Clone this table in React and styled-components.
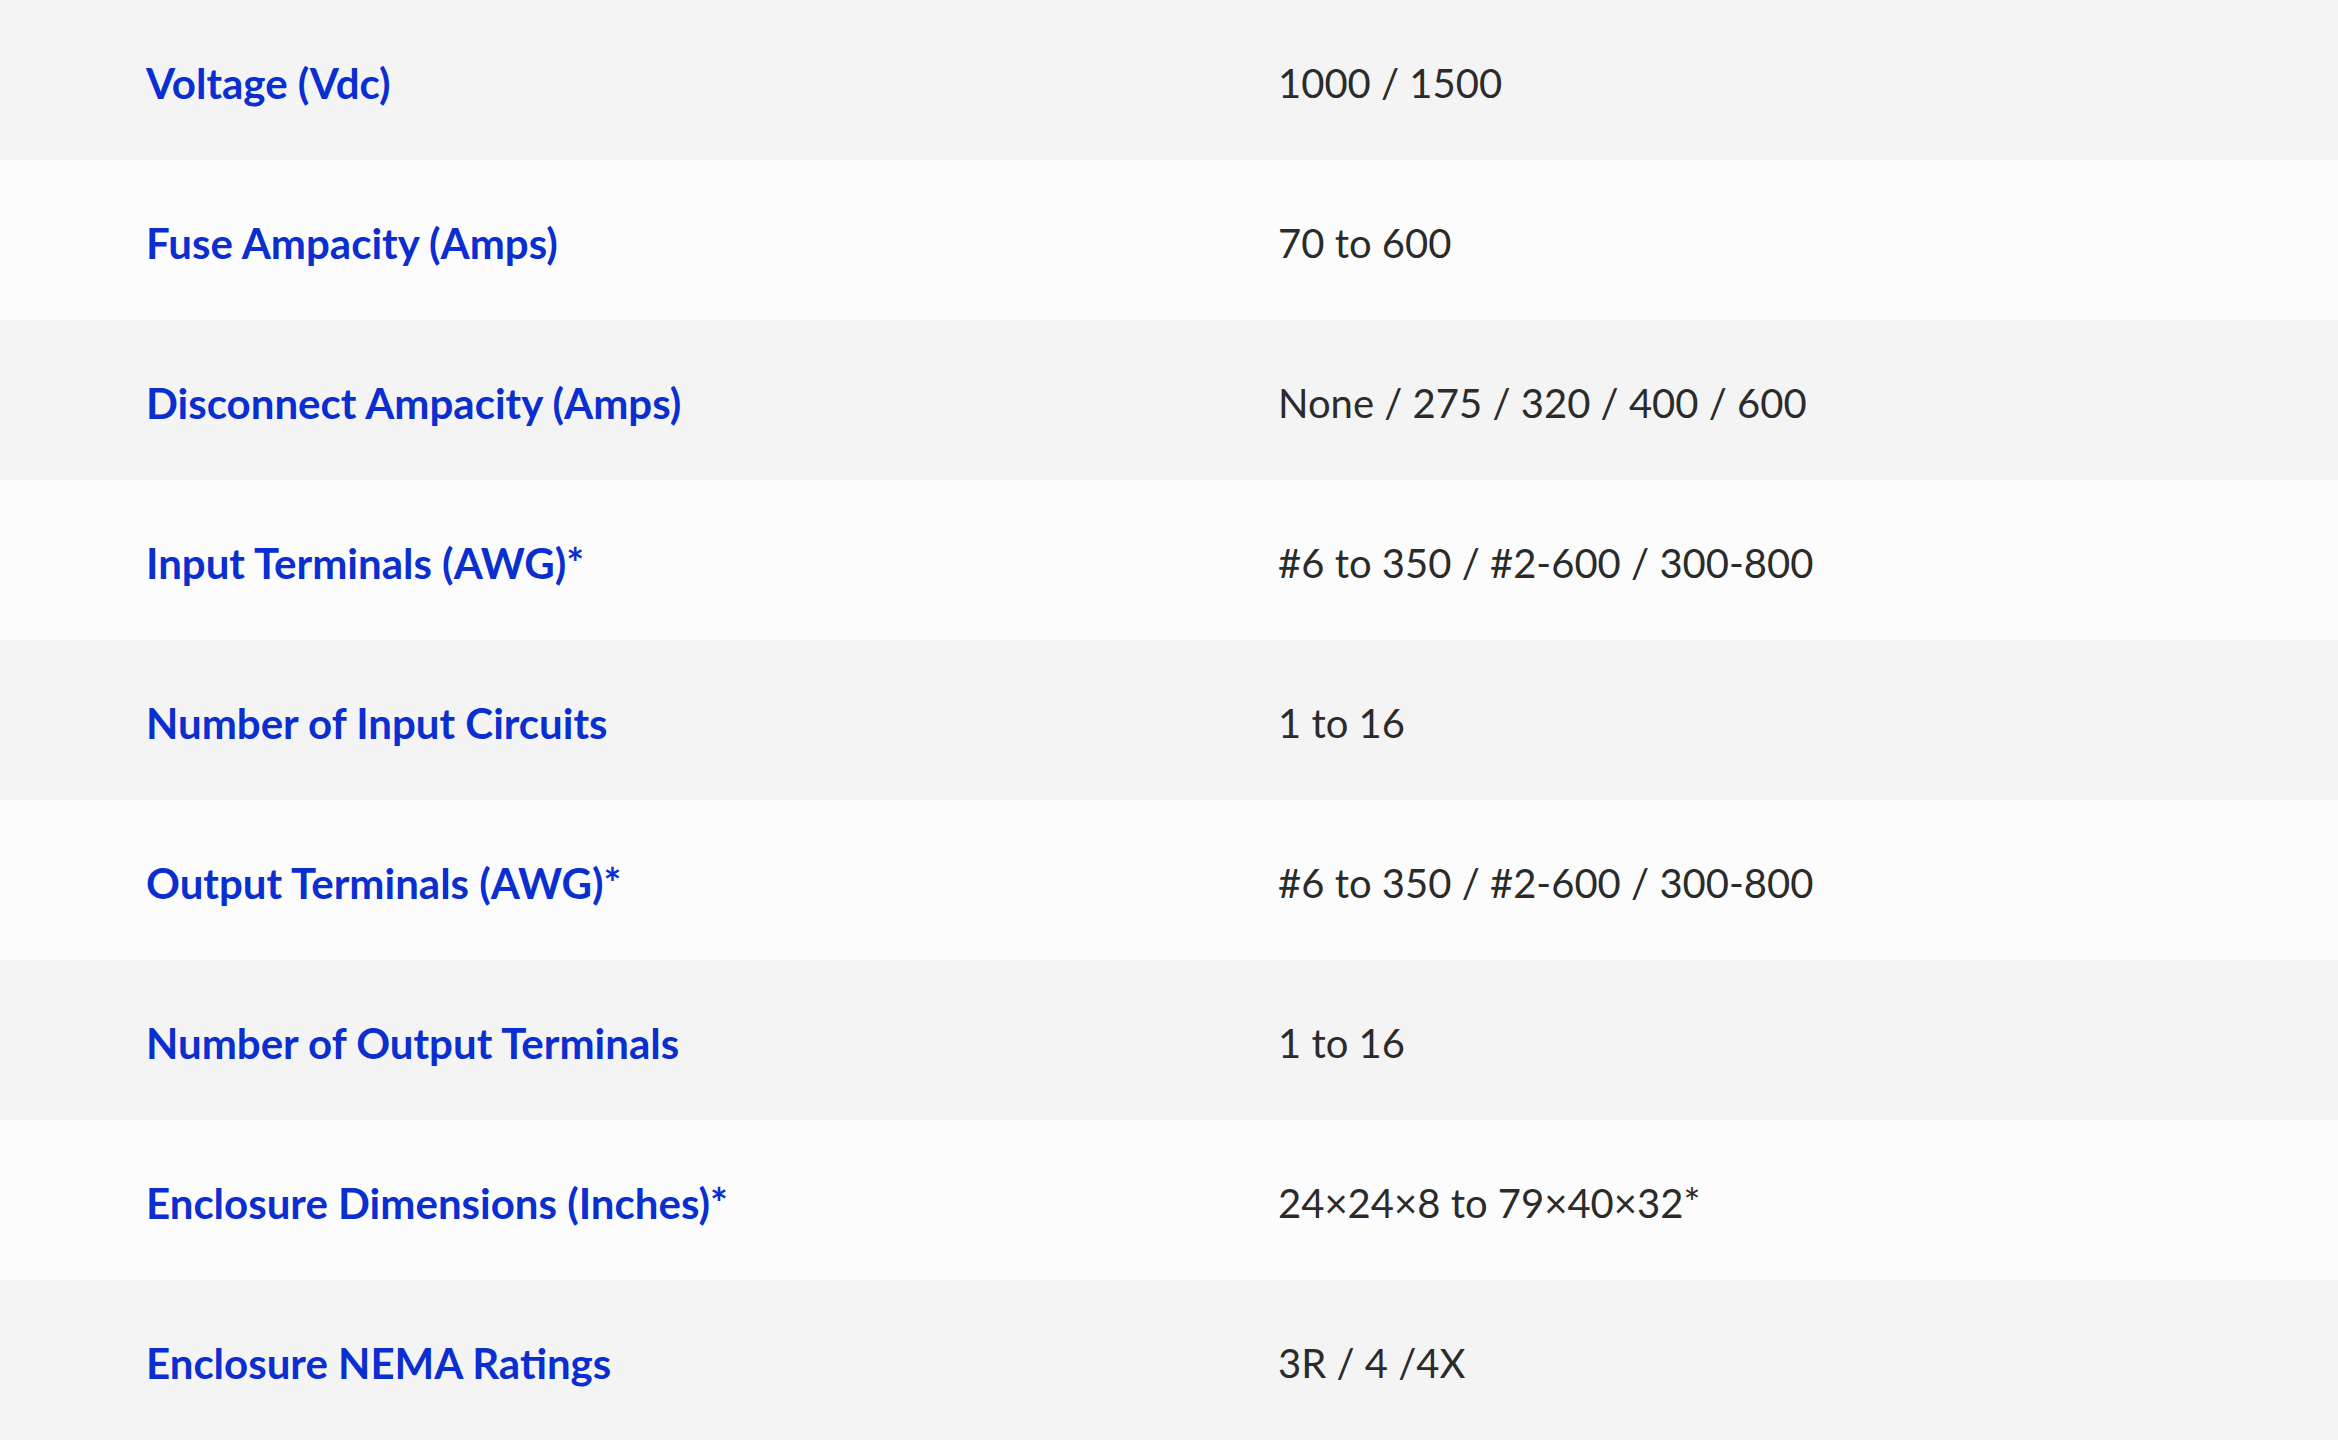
import React from "react";
import styled, { createGlobalStyle } from "styled-components";

const Global = createGlobalStyle`
  html, body { margin: 0; padding: 0; background: #fcfcfc; }
  * { box-sizing: border-box; }
`;

const Table = styled.div`
  display: flex;
  flex-direction: column;
  width: 100%;
`;

const Row = styled.div`
  display: grid;
  grid-template-columns: 1132px 1fr;
  align-items: center;
  height: 160px;
  padding-left: 146px;
  padding-top: 5px;
  background: ${(p) => (p.$alt ? "#fcfcfc" : "#f4f4f4")};
`;

const Label = styled.div`
  font-family: Lato, "Liberation Sans", sans-serif;
  font-weight: 700;
  font-size: 42px;
  color: #0a2ecf;
`;

const Value = styled.div`
  font-family: Lato, "Liberation Sans", sans-serif;
  font-weight: 400;
  font-size: 40px;
  color: #2b2b2b;
`;

const rows = [
  ["Voltage (Vdc)", "1000 / 1500"],
  ["Fuse Ampacity (Amps)", "70 to 600"],
  ["Disconnect Ampacity (Amps)", "None / 275 / 320 / 400 / 600"],
  ["Input Terminals (AWG)*", "#6 to 350 / #2-600 / 300-800"],
  ["Number of Input Circuits", "1 to 16"],
  ["Output Terminals (AWG)*", "#6 to 350 / #2-600 / 300-800"],
  ["Number of Output Terminals", "1 to 16"],
  ["Enclosure Dimensions (Inches)*", "24×24×8 to 79×40×32*"],
  ["Enclosure NEMA Ratings", "3R / 4 /4X"],
];

export default function App() {
  return (
    <>
      <Global />
      <Table>
        {rows.map(([l, v], i) => (
          <Row key={l} $alt={i % 2 === 1}>
            <Label>{l}</Label>
            <Value>{v}</Value>
          </Row>
        ))}
      </Table>
    </>
  );
}
